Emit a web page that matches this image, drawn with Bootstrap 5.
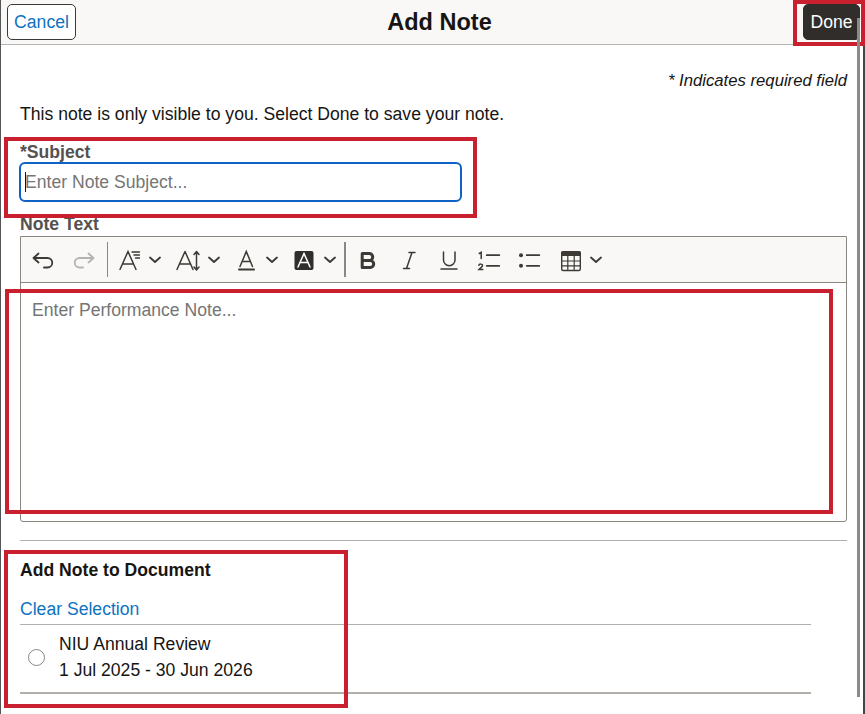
<!DOCTYPE html>
<html lang="en">
<head>
  <meta charset="utf-8" />
  <meta name="viewport" content="width=device-width, initial-scale=1" />
  <title>Add Note</title>
  <link href="https://cdn.jsdelivr.net/npm/bootstrap@5.3.2/dist/css/bootstrap.min.css" rel="stylesheet" />
  <style>
    html, body { height: 100%; overflow: hidden; }
    body {
      font-family: "Liberation Sans", Arial, sans-serif;
      font-size: 17.6px;
      color: #161513;
      background: #fff;
    }
    .pagina {
      position: relative;
      height: 714px;
      border-left: 1px solid #555;
      border-right: 2px solid #444;
    }
    .cabecera {
      height: 45px;
      background: #f9f8f6;
      border-bottom: 1px solid #b3b3b3;
      padding: 4px 3px 0 6px;
    }
    .cabecera h1 { font-size: 23.5px; font-weight: 700; margin: 0; line-height: 36px; }
    .btn-cancelar, .btn-hecho {
      height: 36px;
      font-size: 17.6px;
      padding: 0;
      border-radius: 5px;
    }
    .btn-cancelar { width: 69px; background: #fff; border: 1px solid #3d3935; color: #0e72c1; }
    .btn-hecho { width: 57px; background: #312d2a; border: 1px solid #312d2a; color: #fff; }
    .cuerpo { padding: 0 16px 0 19px; }
    .requerido { font-style: italic; font-size: 16.7px; line-height: 20px; padding-top: 26px; text-align: right; }
    .aviso { line-height: 20px; margin: 13px 0 0; }
    .etiqueta { display: block; font-weight: 700; color: #55524f; line-height: 18px; margin: 0; }
    .et-asunto { margin-top: 19px; }
    .et-texto { margin-top: 13px; }
    .campo-asunto {
      display: block;
      width: 443px;
      height: 40px;
      margin: 1px 0 0 -1px;
      padding: 0 4px;
      font-size: 17.6px;
      border: 2px solid #0f62c4;
      border-radius: 6px;
      outline: none;
      background: #fff;
    }
    .campo-asunto::placeholder { color: #757575; opacity: 1; }
    .cursor { position: absolute; left: 24px; top: 172px; width: 1px; height: 20px; background: #161513; }
    .editor {
      height: 286px;
      margin-top: 3px;
      border: 1px solid #8a8680;
      border-radius: 0 0 3px 3px;
    }
    .barra {
      height: 46px;
      background: #f9f8f6;
      border-bottom: 1px solid #8a8680;
      padding-left: 8px;
    }
    .barra svg { display: block; flex: none; }
    .herr { width: 30px; height: 30px; }
    .flecha { width: 14px; height: 10px; }
    .sep { height: 35px; background: #8a8680; flex: none; }
    .sep-a { width: 1px; margin: 0 8px 0 7px; }
    .sep-b { width: 2px; margin: 0 8px 0 7px; }
    .i-deshacer { margin-right: 11px; }
    .i-tipo { margin-right: 2px; }
    .f-tipo { margin-right: 12px; }
    .f-alto { margin: 0 11px 0 3px; }
    .i-color { margin-right: 3px; }
    .f-color { margin-right: 8px; }
    .i-fondo { margin-right: 6px; }
    .i-negrita { margin-right: 11px; }
    .i-cursiva, .i-subrayado, .i-numeros { margin-right: 10px; }
    .i-vinetas { margin-right: 14px; }
    .texto-editor { padding: 17px 11px 0; line-height: 20px; color: #757575; }
    .linea { height: 1px; background: #b3b0ac; margin-top: 18px; }
    .titulo-doc { font-weight: 700; line-height: 20px; margin: 19px 0 0; }
    .limpiar { display: block; color: #0e72c1; text-decoration: none; line-height: 20px; margin-top: 19px; }
    .lista-doc { width: 791px; }
    .fila-doc { height: 70px; border-top: 1px solid #b3b0ac; border-bottom: 2px solid #b3b0ac; margin-top: 5px; padding-bottom: 3px; }
    .radio-doc { width: 17px; height: 17px; border: 1px solid #8a8680; border-radius: 50%; margin-left: 8px; margin-right: 14px; flex: none; }
    .fila-doc p { margin: 0; line-height: 26px; }
    .barra-scroll { position: absolute; left: 856px; top: 18px; width: 3px; height: 679px; background: #8a8a8a; }
    .marca { position: absolute; border: 4px solid #c8202f; pointer-events: none; }
    .m-hecho { left: 792px; top: 0; width: 72px; height: 46px; }
    .m-asunto { left: 3px; top: 137px; width: 473px; height: 81px; }
    .m-editor { left: 4px; top: 289px; width: 828px; height: 225px; }
    .m-doc { left: 3px; top: 550px; width: 344px; height: 158px; }
  </style>
</head>
<body>
  <div class="pagina">
    <!-- Cabecera -->
    <div class="cabecera d-flex align-items-start justify-content-between">
      <button type="button" class="btn btn-cancelar">Cancel</button>
      <h1>Add Note</h1>
      <button type="button" class="btn btn-hecho">Done</button>
    </div>

    <div class="cuerpo">
      <div class="requerido">* Indicates required field</div>
      <p class="aviso">This note is only visible to you. Select Done to save your note.</p>

      <label class="etiqueta et-asunto" for="asunto">*Subject</label>
      <input class="campo-asunto" id="asunto" type="text" placeholder="Enter Note Subject..." />

      <label class="etiqueta et-texto">Note Text</label>

      <!-- Editor -->
      <div class="editor">
        <div class="barra d-flex align-items-center">
          <svg class="herr i-deshacer" viewBox="0 0 30 30" fill="none" stroke="#3d3935" stroke-width="1.8" stroke-linecap="round" stroke-linejoin="round"><path d="M9.500 8.500 4.500 13l5 4.500M5 13h13.500a4.750 4.750 0 0 1 0 9.500H15"/></svg>
          <svg class="herr" viewBox="0 0 30 30" fill="none" stroke="#b5b3b0" stroke-width="1.8" stroke-linecap="round" stroke-linejoin="round"><path d="M18.500 8.500l5 4.500-5 4.500M23 13H9.500a4.750 4.750 0 0 0 0 9.500H13"/></svg>
          <div class="sep sep-a"></div>
          <svg class="herr i-tipo" viewBox="0 0 30 30" fill="none" stroke="#3d3935" stroke-width="1.5" stroke-linecap="round"><path d="M4 24.500 12 6.500l8 18M6.500 19h11"/><path d="M16 7h7.500M18 10h5.500M19.500 13h4" stroke-width="1.300"/></svg>
          <svg class="flecha f-tipo" viewBox="0 0 14 10" fill="none" stroke="#3d3935" stroke-width="1.800" stroke-linecap="round" stroke-linejoin="round"><path d="M2 2.500 7 7l5-4.500"/></svg>
          <svg class="herr" viewBox="0 0 30 30" fill="none" stroke="#3d3935" stroke-width="1.500" stroke-linecap="round" stroke-linejoin="round"><path d="M3 24.500 11 6.500l8 18M5.500 19h11"/><path d="M22.500 7v17.500M20 9.500l2.500-3 2.500 3M20 22l2.500 3 2.500-3"/></svg>
          <svg class="flecha f-alto" viewBox="0 0 14 10" fill="none" stroke="#3d3935" stroke-width="1.800" stroke-linecap="round" stroke-linejoin="round"><path d="M2 2.500 7 7l5-4.500"/></svg>
          <svg class="herr i-color" viewBox="0 0 30 30" fill="none" stroke="#3d3935" stroke-width="1.500" stroke-linecap="round"><path d="M8 21.500 14.300 6.500l6.200 15M10 16.500h8.500"/><path d="M7 24.500h15" stroke-width="2"/></svg>
          <svg class="flecha f-color" viewBox="0 0 14 10" fill="none" stroke="#3d3935" stroke-width="1.800" stroke-linecap="round" stroke-linejoin="round"><path d="M2 2.500 7 7l5-4.500"/></svg>
          <svg class="herr i-fondo" viewBox="0 0 30 30"><rect x="7.500" y="6" width="19" height="19" rx="2" fill="#312d2a"/><path d="M11 22 17 8.500 23 22M13 17.500h8" fill="none" stroke="#fff" stroke-width="1.500" stroke-linecap="round"/></svg>
          <svg class="flecha" viewBox="0 0 14 10" fill="none" stroke="#3d3935" stroke-width="1.800" stroke-linecap="round" stroke-linejoin="round"><path d="M2 2.500 7 7l5-4.500"/></svg>
          <div class="sep sep-b"></div>
          <svg class="herr i-negrita" viewBox="0 0 30 30" fill="none" stroke="#3d3935" stroke-width="3" stroke-linejoin="round"><path d="M8.200 8.500h7a3.500 3.500 0 0 1 0 7h-7zM8.200 15.500h8a3.500 3.500 0 0 1 0 7h-8z"/></svg>
          <svg class="herr i-cursiva" viewBox="0 0 30 30" fill="none" stroke="#3d3935" stroke-width="1.500" stroke-linecap="round"><path d="M14 7.500h6M8.500 23.500h6M17 7.500 11.500 23.500"/></svg>
          <svg class="herr i-subrayado" viewBox="0 0 30 30" fill="none" stroke="#3d3935" stroke-width="1.500" stroke-linecap="round"><path d="M8.500 7v8a5.750 5.750 0 0 0 11.500 0V7"/><path d="M6 24h16"/></svg>
          <svg class="herr i-numeros" viewBox="0 0 30 30" fill="none" stroke="#3d3935" stroke-linecap="round"><path d="M11.700 10.200h12.600M11.700 20.800h12.600" stroke-width="1.700"/><path d="M4.300 8.500 6.200 7.300v6.300" stroke-width="1.500"/><path d="M3.800 20.200c.4-1.500 3.800-1.500 3.800.4 0 1.400-2.400 2-3.800 4h4" stroke-width="1.500"/></svg>
          <svg class="herr i-vinetas" viewBox="0 0 30 30" fill="none" stroke="#3d3935" stroke-linecap="round"><circle cx="6" cy="10.200" r="2" fill="#3d3935" stroke="none"/><circle cx="6" cy="20.800" r="2" fill="#3d3935" stroke="none"/><path d="M11.700 10.200h12.600M11.700 20.800h12.600" stroke-width="1.700"/></svg>
          <svg class="herr" viewBox="0 0 30 30" fill="none" stroke="#3d3935"><rect x="2.700" y="6.900" width="18.600" height="18.600" rx="1.500" stroke-width="1.400"/><path d="M2 8a2 2 0 0 1 2-2h16a2 2 0 0 1 2 2v3H2z" fill="#3d3935" stroke="none"/><path d="M2.700 16h18.600M2.700 20.800h18.600M8.800 11v14M15.200 11v14" stroke-width="1.200"/></svg>
          <svg class="flecha" viewBox="0 0 14 10" fill="none" stroke="#3d3935" stroke-width="1.800" stroke-linecap="round" stroke-linejoin="round"><path d="M2 2.500 7 7l5-4.500"/></svg>
        </div>
        <div class="texto-editor">Enter Performance Note...</div>
      </div>

      <div class="linea"></div>

      <p class="titulo-doc">Add Note to Document</p>
      <a class="limpiar" href="#">Clear Selection</a>
      <div class="lista-doc">
        <div class="fila-doc d-flex align-items-center">
          <span class="radio-doc"></span>
          <div>
            <p>NIU Annual Review</p>
            <p>1 Jul 2025 - 30 Jun 2026</p>
          </div>
        </div>
      </div>
    </div>

    <!-- Marcas rojas y barra de desplazamiento, encima del contenido -->
    <div class="cursor"></div>
    <div class="marca m-hecho"></div>
    <div class="marca m-asunto"></div>
    <div class="marca m-editor"></div>
    <div class="marca m-doc"></div>
    <div class="barra-scroll"></div>
  </div>

  <script src="https://cdn.jsdelivr.net/npm/bootstrap@5.3.2/dist/js/bootstrap.bundle.min.js"></script>
</body>
</html>
